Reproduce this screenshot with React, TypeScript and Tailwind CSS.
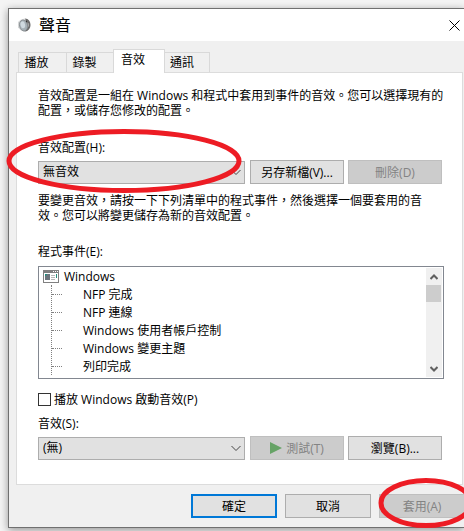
import React, { useState } from 'react';

const tabs = ['播放', '錄製', '音效', '通訊'];

const events = [
  'NFP 完成',
  'NFP 連線',
  'Windows 使用者帳戶控制',
  'Windows 變更主題',
  '列印完成',
];

const buttonBase =
  'flex h-6 items-center justify-center whitespace-nowrap border border-[#adadad] bg-[#e1e1e1] disabled:border-[#bfbfbf] disabled:bg-[#cccccc] disabled:text-[#838383]';

const SpeakerIcon: React.FC = () => (
  <svg width="15" height="16" viewBox="0 0 15 16" aria-hidden="true">
    <path d="M1 5 4 2.500 8 1.500l4 2.500 1 4-2 5-3 2-4-1.500-3-3z" fill="#d5d7d8" />
    <path d="M8 1.500c3.500 0 5.500 3 5.500 6.500S11 14.500 8 14.500c2-2 2.500-9 0-13z" fill="#6b6b6b" />
    <path d="M10.500 5.500c1 1 1 3.500 0 5" stroke="#c4c4c4" fill="none" />
    <ellipse cx="6.500" cy="8.500" rx="4" ry="5.500" fill="#a5afb5" stroke="#858b8f" strokeWidth="0.8" transform="rotate(-12 6.500 8.500)" />
    <ellipse cx="5.800" cy="7.800" rx="2.300" ry="3.500" fill="#cfd9df" transform="rotate(-12 5.800 7.800)" />
    <path d="M9 3.500l1 2" stroke="#333" />
  </svg>
);

const ProgramIcon: React.FC = () => (
  <svg width="16" height="13" viewBox="0 0 16 13" aria-hidden="true" shapeRendering="crispEdges">
    <path d="M0 0h16v13H0z" fill="#808080" />
    <path d="M1 3h14v9H1z" fill="#fff" />
    <path d="M10 1h1v1h-1zM12 1h1v1h-1zM14 1h1v1h-1z" fill="#fff" />
    <path d="M2 4h5v6H2z" fill="#6c757c" />
    <path d="M2 4h2v1H3v1H2z" fill="#1f8f80" />
    <path d="M8 5h4v1H8zM8 7h4v1H8zM8 9h4v1H8z" fill="#b8b8b8" />
    <path d="M13 4h1v4h-1z" fill="#258a78" />
  </svg>
);

interface ComboProps {
  id: string;
  value: string;
}

const Combo: React.FC<ComboProps> = ({ id, value }) => (
  <div className="relative min-w-0 flex-1">
    <select
      id={id}
      className="block h-[23px] w-full appearance-none border border-[#adadad] bg-[#e1e1e1] pr-5 pl-1 leading-5"
    >
      <option>{value}</option>
    </select>
    <svg
      className="pointer-events-none absolute top-2 right-1"
      width="10"
      height="7"
      viewBox="0 0 10 7"
      fill="none"
      stroke="#444"
    >
      <path d="m.5 1 4.500 4.500L9.500 1" />
    </svg>
  </div>
);

const App: React.FC = () => {
  const [activeTab, setActiveTab] = useState('音效');

  return (
    <div
      lang="zh-TW"
      className="relative overflow-hidden bg-[#f4f4f4] pt-2 pb-[3px] pl-2 font-['Open_Sans','Noto_Sans_CJK_TC',sans-serif] text-xs leading-[15px] text-black"
    >
      <div className="border border-r-0 border-[#707070] bg-[#f0f0f0] shadow-[0_2px_8px_rgba(0,0,0,0.4)]">
        {/* Title bar */}
        <header className="flex h-8 items-center bg-white pr-1 pl-2">
          <SpeakerIcon />
          <h1 className="ml-[7px] flex-1 text-base leading-5">聲音</h1>
          <button aria-label="關閉" className="p-0">
            <svg width="11" height="11" viewBox="0 0 11 11" stroke="#000">
              <path d="m.5.5 10 10M10.500.5l-10 10" />
            </svg>
          </button>
        </header>

        <main className="pt-2 pr-px pl-[7px]">
          {/* Tabs */}
          <div role="tablist" className="flex items-end pl-0.5">
            {tabs.map((tab) => (
              <button
                key={tab}
                role="tab"
                aria-selected={tab === activeTab}
                onClick={() => setActiveTab(tab)}
                className={
                  tab === activeTab
                    ? 'relative z-10 -mb-px -ml-px h-6 w-[52px] border border-b-0 border-[#d9d9d9] bg-white pr-3 pb-1'
                    : 'h-5 w-12 border border-r-0 border-b-0 border-[#d9d9d9] pr-3 last:w-[45px] last:border-r last:border-l-0 last:pr-2.5'
                }
              >
                {tab}
              </button>
            ))}
          </div>

          <section className="border border-[#dcdcdc] bg-white pt-[15px] pr-5 pb-6 pl-[21px]">
            <p className="-mr-2.5">
              音效配置是一組在 Windows 和程式中套用到事件的音效。您可以選擇現有的配置，或儲存您修改的配置。
            </p>

            <label htmlFor="scheme" className="mt-[22px] block">
              音效配置(H):
            </label>
            <div className="mt-[5px] flex items-center gap-1">
              <Combo id="scheme" value="無音效" />
              <button className={`${buttonBase} ml-px w-[94px]`}>另存新檔(V)...</button>
              <button disabled className={`${buttonBase} w-[94px]`}>
                刪除(D)
              </button>
            </div>

            <p className="mt-[9px] pr-4">
              要變更音效，請按一下下列清單中的程式事件，然後選擇一個要套用的音效。您可以將變更儲存為新的音效配置。
            </p>

            <h2 className="mt-[21px]">程式事件(E):</h2>
            <div className="mt-[7px] -mr-0.5 flex h-[113px] border border-[#828790] p-px pt-0">
              <div className="flex-1 overflow-hidden pl-[3px]">
                <div className="flex h-[18px] items-center gap-[5px]">
                  <ProgramIcon />
                  <span>Windows</span>
                </div>
                <ul className="ml-2 border-l border-dotted border-[#808080]">
                  {events.map((event) => (
                    <li key={event} className="flex h-[18px] items-center gap-[21px]">
                      <span className="w-[10px] border-t border-dotted border-[#808080]" />
                      {event}
                    </li>
                  ))}
                </ul>
              </div>
              {/* Scrollbar */}
              <div className="mt-px flex w-4 flex-col bg-[#f0f0f0]">
                <button aria-label="向上捲動" className="flex h-[17px] items-center justify-center">
                  <svg width="8" height="6" viewBox="0 0 8 6" fill="none" stroke="#606060" strokeWidth="2">
                    <path d="m.5 5 3.500-3.500L7.500 5" />
                  </svg>
                </button>
                <div className="h-[17px] w-[15px] bg-[#cdcdcd]" />
                <button
                  aria-label="向下捲動"
                  className="mt-auto flex h-[17px] items-center justify-center"
                >
                  <svg width="8" height="6" viewBox="0 0 8 6" fill="none" stroke="#606060" strokeWidth="2">
                    <path d="m.5 1 3.500 3.500L7.500 1" />
                  </svg>
                </button>
              </div>
            </div>

            <label className="mt-[13px] flex items-center gap-[3px]">
              <input
                type="checkbox"
                className="h-[13px] w-[13px] appearance-none border border-[#333] bg-white checked:bg-[#333]"
              />
              播放 Windows 啟動音效(P)
            </label>

            <label htmlFor="sound" className="mt-[9px] block">
              音效(S):
            </label>
            <div className="mt-[5px] flex items-center gap-1">
              <Combo id="sound" value="(無)" />
              <button disabled className={`${buttonBase} ml-px w-[94px] gap-1`}>
                <svg width="12" height="12" viewBox="0 0 12 12" fill="#66a366">
                  <path d="M0 0l12 6-12 6z" />
                </svg>
                測試(T)
              </button>
              <button className={`${buttonBase} w-[94px]`}>瀏覽(B)...</button>
            </div>
          </section>

          <footer className="-mr-0.5 flex justify-end gap-2 pt-[9px] pb-[9px]">
            <button className="flex h-6 w-[86px] items-center justify-center border-2 border-[#0078d7] bg-[#e1e1e1]">
              確定
            </button>
            <button className={`${buttonBase} w-[86px]`}>取消</button>
            <button disabled className={`${buttonBase} w-[86px]`}>
              套用(A)
            </button>
          </footer>
        </main>
      </div>

      {/* Highlight marks over the scheme list and the apply button */}
      <svg
        className="pointer-events-none absolute top-[126px] left-[4px]"
        width="240"
        height="70"
        viewBox="0 0 240 70"
        fill="none"
        stroke="#ed1c24"
        strokeWidth="5"
      >
        <ellipse cx="120" cy="35" rx="115" ry="29.500" />
      </svg>
      <svg
        className="pointer-events-none absolute right-[-10px] bottom-0"
        width="96"
        height="56"
        viewBox="0 0 96 56"
        fill="none"
        stroke="#ed1c24"
        strokeWidth="5"
      >
        <ellipse cx="48" cy="28" rx="45" ry="22.500" />
      </svg>
    </div>
  );
};

export default App;
